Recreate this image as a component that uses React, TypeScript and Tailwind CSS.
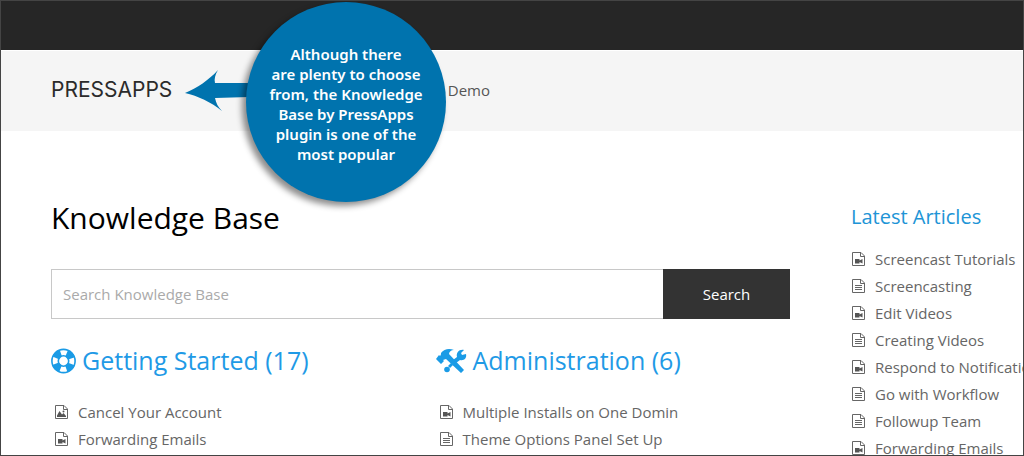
import type { ReactNode } from 'react'

type ArticleKind = 'video' | 'text' | 'image'

interface Article {
  kind: ArticleKind
  title: string
}

const GETTING_STARTED: Article[] = [
  { kind: 'image', title: 'Cancel Your Account' },
  { kind: 'video', title: 'Forwarding Emails' },
]

const ADMINISTRATION: Article[] = [
  { kind: 'video', title: 'Multiple Installs on One Domin' },
  { kind: 'text', title: 'Theme Options Panel Set Up' },
]

const LATEST: Article[] = [
  { kind: 'video', title: 'Screencast Tutorials' },
  { kind: 'text', title: 'Screencasting' },
  { kind: 'video', title: 'Edit Videos' },
  { kind: 'text', title: 'Creating Videos' },
  { kind: 'video', title: 'Respond to Notifications' },
  { kind: 'text', title: 'Go with Workflow' },
  { kind: 'text', title: 'Followup Team' },
  { kind: 'video', title: 'Forwarding Emails' },
]

export default function App() {
  return (
    <div className="relative h-screen overflow-hidden border border-[#444] bg-white font-['Open_Sans',sans-serif] text-[15px] text-[#666]">
      <div className="h-[49px] bg-[#262626]" />

      <header className="flex h-[81px] items-center justify-between border-t border-white bg-[#f5f5f5] pb-[2px] pl-[50px] pr-[533px]">
        <a href="#" className="font-['Inter',sans-serif] text-[21px] leading-6 text-[#2b2b2b]">
          PRESSAPPS
        </a>
        <nav>
          <a href="#" className="text-[15px] text-[#555]">Demo</a>
        </nav>
      </header>

      <Callout />

      <div className="flex gap-[61px] pl-[50px] pt-[65px]">
        <main className="min-w-0 flex-1">
          <h1 className="text-[30px] leading-[44px] text-black">Knowledge Base</h1>

          <form className="mt-[29px] flex h-[50px]" onSubmit={(e) => e.preventDefault()}>
            <input
              type="search"
              aria-label="Search Knowledge Base"
              placeholder="Search Knowledge Base"
              className="min-w-0 flex-1 border border-r-0 border-[#c8c8c8] px-[11px] outline-none placeholder:text-[#aaa]"
            />
            <button type="submit" className="w-[127px] bg-[#333] text-white">
              Search
            </button>
          </form>

          <div className="mt-6 grid grid-cols-2 gap-[30px]">
            <Category icon={<LifeRingIcon />} title="Getting Started (17)" articles={GETTING_STARTED} />
            <Category icon={<ToolsIcon />} title="Administration (6)" articles={ADMINISTRATION} />
          </div>
        </main>

        <aside className="w-[172px] shrink-0">
          <h2 className="mb-2 text-[20px] leading-[42px] text-[#2094d6]">Latest Articles</h2>
          <ArticleList articles={LATEST} />
        </aside>
      </div>
    </div>
  )
}

function Category({ icon, title, articles }: { icon: ReactNode; title: string; articles: Article[] }) {
  return (
    <section>
      <h2 className="mb-5 flex h-9 items-center gap-[6px] whitespace-nowrap text-[25px] text-[#1f9ae6]">
        {icon}
        {title}
      </h2>
      <div className="pl-[3px]">
        <ArticleList articles={articles} />
      </div>
    </section>
  )
}

function ArticleList({ articles }: { articles: Article[] }) {
  return (
    <ul>
      {articles.map((a) => (
        <li key={a.title}>
          <a href="#" className="flex h-[27px] items-center gap-[9px] whitespace-nowrap text-[15px]">
            <FileIcon kind={a.kind} />
            {a.title}
          </a>
        </li>
      ))}
    </ul>
  )
}

// Blue speech disc with an arrow pointing at the logo
function Callout() {
  return (
    <div className="absolute left-[182px] top-px flex">
      <svg width="66" height="44" viewBox="0 0 66 44" className="mt-[67px] shrink-0" aria-hidden="true">
        <path d="M2 24C14 19 26 11 35 1C32 6 31 10 32 14H66V28L32 29C33 34 35 38 39 42C28 33 15 27 2 24Z" fill="#0073ae" />
      </svg>
      <div className="-ml-[3px] flex size-[200px] items-center justify-center rounded-full bg-[#0073ae] pt-1 text-center font-['Noto_Sans',sans-serif] text-[15px] font-semibold leading-5 text-white shadow-[-4px_4px_6px_rgba(0,0,0,0.45)]">
        <p>
          Although there
          <br />
          are plenty to choose
          <br />
          from, the Knowledge
          <br />
          Base by PressApps
          <br />
          plugin is one of the
          <br />
          most popular
        </p>
      </div>
    </div>
  )
}

function FileIcon({ kind }: { kind: ArticleKind }) {
  return (
    <svg width="15" height="16" viewBox="0 0 15 16" className="shrink-0" fill="none" stroke="#666" aria-hidden="true">
      <path d="M1.5 .5H10L13.5 4V13.5H1.5Z" />
      <path d="M9.5 .5V4.5H13.5" />
      {kind === 'text' && <path d="M4 6.5H11M4 8.5H11M4 10.5H11" />}
      {kind === 'video' && <path d="M4 7H8.5V8.5L11.5 7V11.5L8.5 10V11.5H4Z" fill="#555" stroke="none" />}
      {kind === 'image' && (
        <>
          <path d="M3 12V10.5L5.5 6L8 9.5L9.5 8L12 11V12Z" fill="#555" stroke="none" />
          <circle cx="9.5" cy="6.5" r="1" fill="#555" stroke="none" />
        </>
      )}
    </svg>
  )
}

function LifeRingIcon() {
  return (
    <svg width="25" height="26" viewBox="0 0 25 26" className="shrink-0" fill="none" aria-hidden="true">
      <circle cx="12.5" cy="13" r="8.4" stroke="#1a9be6" strokeWidth="7" strokeDasharray="7.2 5.994" strokeDashoffset="-3" />
      <circle cx="12.5" cy="13" r="11.6" stroke="#1a9be6" strokeWidth="1.6" />
      <circle cx="12.5" cy="13" r="5.2" stroke="#1a9be6" strokeWidth="1.6" />
    </svg>
  )
}

function ToolsIcon() {
  return (
    <svg width="31" height="26" viewBox="0 0 31 26" className="shrink-0" fill="#1a9be6" aria-hidden="true">
      <path d="M0 11L3 7L4 8C5 7 5 6 5 5C8 1 13 0 18 2C15 2 13 4 13 6L28 22L25 25L10 11L7 12L8 13L5 16Z" />
      <path d="M28 2L25 5L26 7L30 6C31 10 28 13 24 12L20 15L17 12L21 9C20 5 23 1 28 2Z" />
      <path d="M15 15L17 17L14 20L12 18Z" />
      <circle cx="11" cy="21.5" r="2.8" />
    </svg>
  )
}
